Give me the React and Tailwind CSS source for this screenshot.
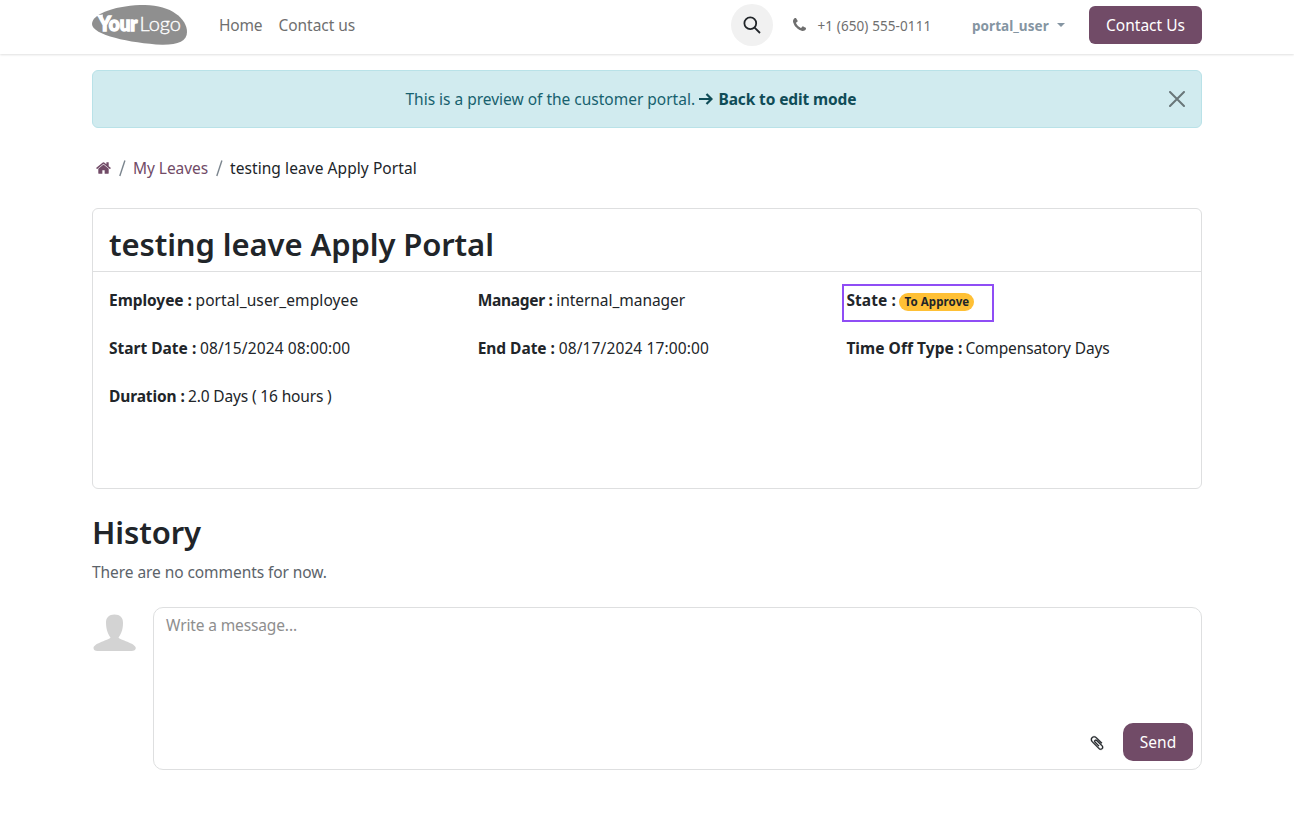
function T({ className = "", children }) {
  return <span className={"inline-block shrink-0 whitespace-nowrap " + className}>{children}</span>;
}

function Field({ label, labelClass, value, valueClass }) {
  return (
    <div className="flex h-6 items-center">
      <T className={"font-bold " + labelClass}>{label}</T>
      <T className={valueClass}>{value}</T>
    </div>
  );
}

function Logo() {
  return (
    <svg width="95" height="40" viewBox="0 0 95 40" className="block">
      <path d="M0 19C0 8 26 0 53 0C79 0 95 14 95 27C95 36 86 40 70 39.8C38 38 0 30 0 19Z" fill="#8f8f8f" />
      <path d="M4 10.2L11 9.6L10 14.2L8 12.8Z" fill="#fff" />
      <text x="6.5" y="25.8" fontFamily="Lato" fontWeight="900" fontSize="20" fill="#fff" stroke="#fff" strokeWidth="1.4" textLength="39" lengthAdjust="spacingAndGlyphs">Your</text>
      <text x="47.5" y="26" fontFamily="Lato" fontWeight="300" fontSize="20.5" fill="#fff" stroke="#fff" strokeWidth="0.35" textLength="41.5" lengthAdjust="spacingAndGlyphs">Logo</text>
    </svg>
  );
}

export default function App() {
  return (
    <div className="min-h-[826px] bg-white font-['Noto_Sans',sans-serif] text-[15.5px] leading-6 text-[#212529]">
      <header className="h-[54px] px-[92px] shadow-[0_1px_2px_rgba(0,0,0,0.12)]">
        <div className="flex h-[50px] items-center">
          <Logo />
          <nav className="ml-8 flex text-[#6f6f6f]">
            <T className="w-[59.5px] tracking-[-0.2px]">Home</T>
            <T className="w-[77px] tracking-[-0.05px]">Contact us</T>
          </nav>
          <div className="ml-auto flex items-center">
            <button className="flex h-[42px] w-[42px] items-center justify-center rounded-full bg-[#f1f1f1]" aria-label="Search">
              <svg width="18" height="18" viewBox="0 0 18 18" fill="none" stroke="#212529" strokeWidth="1.8"><circle cx="7.3" cy="7.3" r="5.9" /><path d="M11.6 11.6L17 17" /></svg>
            </button>
            <svg width="13" height="13" viewBox="0 0 1408 1408" className="-mt-px ml-5" fill="#6f6f6f">
              <path d="M1408 1112q0 27-10 70.5t-21 68.5q-21 50-122 106-94 51-186 51-27 0-53-3.5t-57.5-12.5-47-14.5-55.5-20.5-49-18q-98-35-175-83-127-79-264-216t-216-264q-48-77-83-175-3-9-18-49t-20.5-55.5-14.5-47-12.5-57.5-3.5-53q0-92 51-186 56-101 106-122 25-11 68.5-21t70.5-10q14 0 21 3 18 6 53 76 11 19 30 54t35 63.5 31 53.5q3 4 17.5 25t21.5 35.5 7 28.5q0 20-28.5 50t-62 55-62 53-28.5 46q0 9 5 22.5t8.5 20.5 14 24 11.5 19q76 137 174 235t235 174q2 1 19 11.5t24 14 20.5 8.5 22.5 5q18 0 46-28.5t53-62 55-62 50-28.5q14 0 28.5 7t35.5 21.5 25 17.5q25 15 53.5 31t63.5 35 54 30q70 35 76 53 3 7 3 21z" />
            </svg>
            <T className="ml-3 w-[154.5px] pt-0.5 text-[13.5px] tracking-[0.1px] text-[#6f6f6f]">+1 (650) 555-0111</T>
            <T className="w-[78px] pt-0.5 text-[13.5px] font-bold tracking-[0.05px] text-[#8595a2]">portal_user</T>
            <svg width="8" height="4" viewBox="0 0 8 4" className="ml-[7px]" fill="#8595a2"><path d="M0 0H8L4 4Z" /></svg>
            <button className="ml-6 h-[38px] w-[113px] rounded-md bg-[#714b67] text-white"><T>Contact Us</T></button>
          </div>
        </div>
      </header>
      <main className="px-[92px] pt-4">
        <div className="flex h-[58px] items-center rounded-md border border-[#b9e2e8] bg-[#d1ebef] text-[#17616e]">
          <div className="flex flex-1 items-center pl-[312.5px]">
            <T className="w-[293.5px] tracking-[-0.01px]">This is a preview of the customer portal.</T>
            <svg width="14" height="12" viewBox="0 0 14 12" className="mr-[5.5px]" fill="none" stroke="#0f4c57" strokeWidth="2.2"><path d="M0 6H12M7.5 1L12.5 6L7.5 11" /></svg>
            <T className="font-bold tracking-[-0.13px] text-[#0f4c57]">Back to edit mode</T>
          </div>
          <svg width="16" height="16" viewBox="0 0 16 16" className="mr-4" stroke="#697679" strokeWidth="2" strokeLinecap="round"><path d="M1 1L15 15M15 1L1 15" /></svg>
        </div>
        <nav className="mt-7 flex h-6 items-center pl-1">
          <svg width="15" height="12" viewBox="64 253 1664 1283" fill="#714b67">
            <path d="M1472 992v480q0 26-19 45t-45 19h-384v-384h-256v384h-384q-26 0-45-19t-19-45v-480q0-1 .5-3t.5-3l575-474 575 474q1 2 1 6zm223-69l-62 74q-8 9-21 11h-3q-13 0-21-7l-692-577-692 577q-12 8-24 7-13-2-21-11l-62-74q-8-10-7-23.5t11-21.5l719-599q32-26 76-26t76 26l244 204v-195q0-14 9-23t23-9h192q14 0 23 9t9 23v408l219 182q10 8 11 21.5t-7 23.5z" />
          </svg>
          <svg width="7" height="18" viewBox="0 0 7 18" className="ml-[7.5px] mr-[7.5px]" stroke="#7b858e" strokeWidth="1.4"><path d="M5.9 1.5L0.8 17" /></svg>
          <T className="w-[75px] tracking-[-0.06px] text-[#714b67]">My Leaves</T>
          <svg width="7" height="18" viewBox="0 0 7 18" className="ml-2 mr-[7px]" stroke="#7b858e" strokeWidth="1.4"><path d="M5.9 1.5L0.8 17" /></svg>
          <T className="tracking-[0.07px]">testing leave Apply Portal</T>
        </nav>
        <section className="mt-7 h-[281px] rounded-md border border-[#dedfe0]">
          <h1 className="h-[63px] border-b border-[#dedfe0] pl-4 pt-4 text-[31px] font-semibold leading-[38px] tracking-[-0.1px]"><T>testing leave Apply Portal</T></h1>
          <div className="grid grid-cols-[368.7px_368.7px_1fr] gap-y-6 pl-4 pt-4">
            <Field label="Employee :" labelClass="w-[86.5px] tracking-[-0.05px]" value="portal_user_employee" valueClass="tracking-[0.1px]" />
            <Field label="Manager :" labelClass="w-[78.5px] tracking-[-0.3px]" value="internal_manager" valueClass="tracking-[-0.04px]" />
            <div className="relative flex h-6 items-center">
              <T className="w-[53px] font-bold tracking-[0.1px]">State :</T>
              <span className="mt-1 flex h-[18px] w-[75px] items-center justify-center rounded-full bg-[#ffc035] text-[11.5px] font-bold leading-none tracking-[0.1px]">To Approve</span>
              <div className="absolute -left-[4.4px] -top-1 h-[38px] w-[152px] border-2 border-[#8f4df5]" />
            </div>
            <Field label="Start Date :" labelClass="w-[91px]" value="08/15/2024 08:00:00" valueClass="tracking-[0.12px]" />
            <Field label="End Date :" labelClass="w-[81px] tracking-[-0.04px]" value="08/17/2024 17:00:00" valueClass="tracking-[0.12px]" />
            <Field label="Time Off Type :" labelClass="w-[119px] tracking-[0.05px]" value="Compensatory Days" valueClass="tracking-[-0.12px]" />
            <Field label="Duration :" labelClass="w-[79px] tracking-[-0.12px]" value="2.0 Days ( 16 hours )" valueClass="tracking-[-0.15px]" />
          </div>
        </section>
        <h2 className="mt-6 text-[31px] font-semibold leading-[38px] tracking-[-0.1px]"><T>History</T></h2>
        <p className="mt-[9px] text-[#5c636a]"><T className="tracking-[-0.07px]">There are no comments for now.</T></p>
        <div className="mt-[23px] flex">
          <svg width="45" height="45" viewBox="0 0 45 45" className="mr-4" fill="#d3d3d3">
            <path d="M22.5 7.5C17 7.5 13.8 10.5 14 16C14.2 23 16 27 18.5 30.5C17.5 33 1.7 36 1.5 41C1.5 43 3 44 5.5 44H39.5C42 44 43.8 43 43.8 41C43.5 36 27.5 33 26.5 30.5C29 27 31 23 31 16C31.2 10.5 28 7.5 22.5 7.5Z" />
          </svg>
          <div className="flex h-[163px] flex-1 flex-col justify-between rounded-[10px] border border-[#dedfe0] pb-2 pl-3 pr-2 pt-[5px]">
            <T className="tracking-[-0.13px] text-[#8e8e8e]">Write a message...</T>
            <div className="flex items-center justify-end">
              <svg width="16" height="16" viewBox="0 0 1792 1792" className="mr-[18px] mt-px" fill="#212529" stroke="#212529" strokeWidth="30">
                <path d="M1596 1385q0 117-79 196t-196 79q-135 0-235-100l-777-776q-113-115-113-271 0-159 110-270t269-111q158 0 273 113l605 606q10 10 10 22 0 16-30.5 46.5t-46.5 30.5q-13 0-23-10l-606-607q-79-77-181-77-106 0-179 75t-73 181q0 105 76 181l776 777q63 63 145 63 64 0 106-42t42-106q0-82-63-145l-581-581q-26-24-60-24-29 0-48 19t-19 48q0 32 25 59l410 410q10 10 10 22 0 16-31 47t-47 31q-12 0-22-10l-410-410q-63-61-63-149 0-82 57-139t139-57q88 0 149 63l581 581q100 98 100 235z" />
              </svg>
              <button className="h-[38px] w-[70px] rounded-[10px] bg-[#714b67] text-white">Send</button>
            </div>
          </div>
        </div>
      </main>
    </div>
  );
}
